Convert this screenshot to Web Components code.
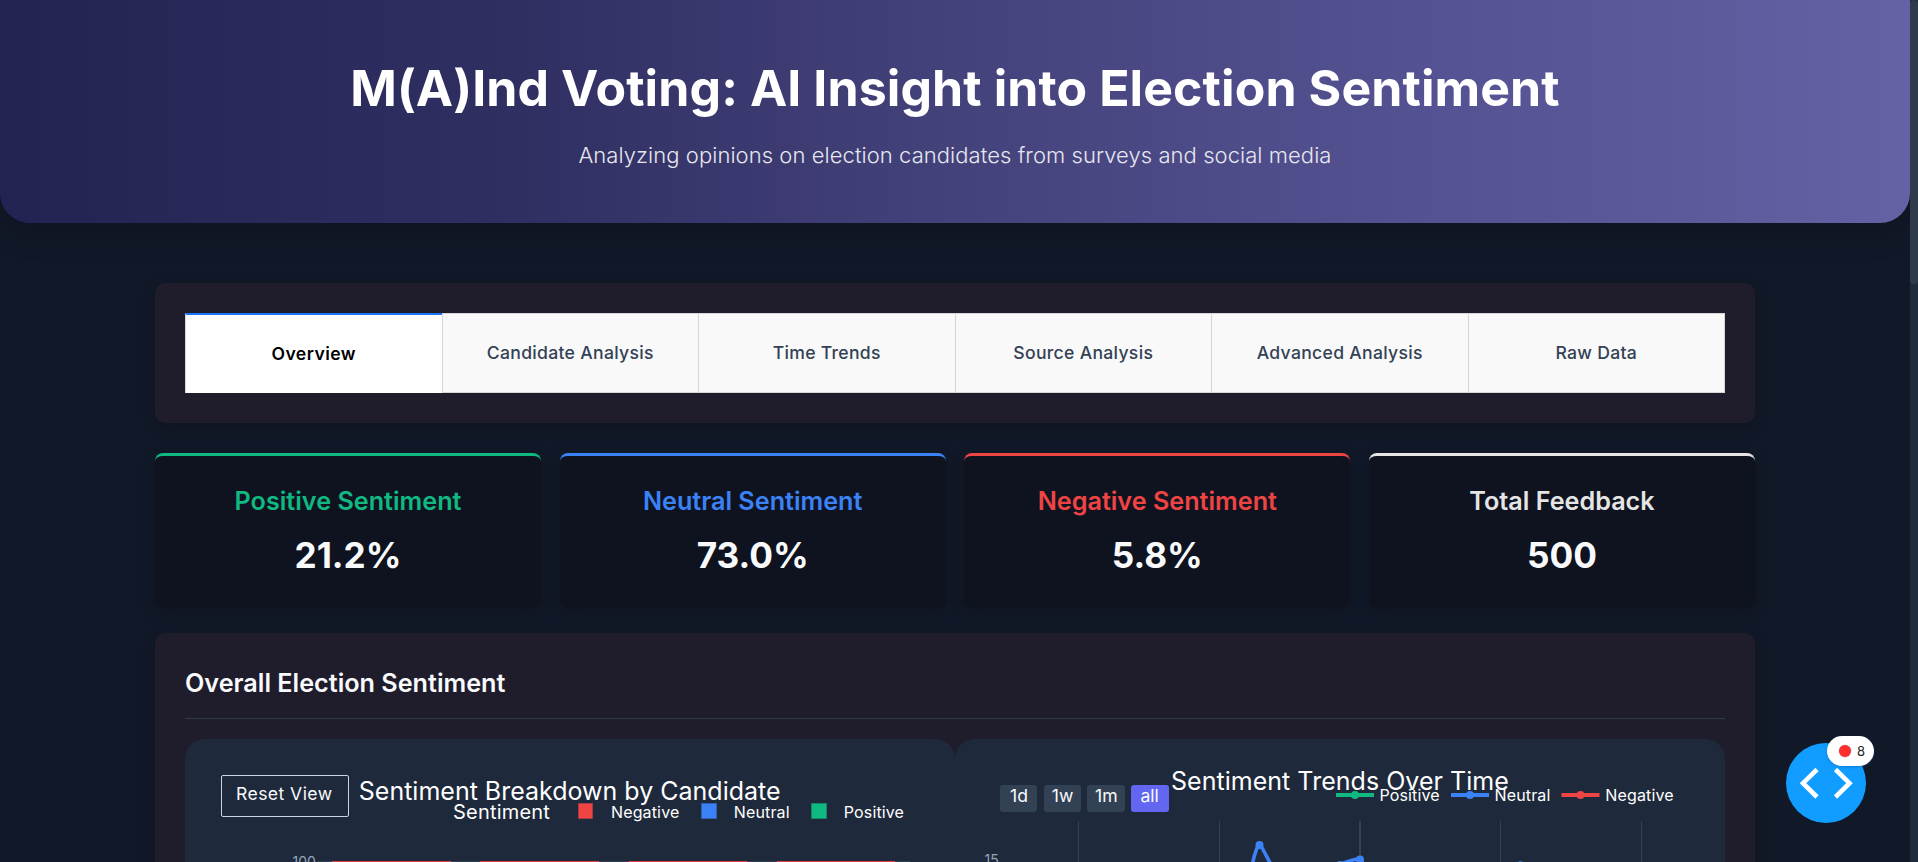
<!DOCTYPE html>
<html lang="en">
<head>
<meta charset="utf-8">
<title>M(A)Ind Voting</title>
<style>
html,body{margin:0;height:100%;overflow:hidden;background:#111827}
body{font-family:Inter,"Liberation Sans",sans-serif;color:#f8fafc}
</style>
</head>
<body>
<voting-app></voting-app>
<script>
const define = (name, html) => customElements.define(name, class extends HTMLElement {
  constructor() {
    super();
    this.attachShadow({mode: 'open'});
    const t = document.createElement('template');
    t.innerHTML = html;
    this.shadowRoot.append(t.content.cloneNode(true));
  }
});

define('page-hero', `
<style>
:host{display:flex;flex-direction:column;align-items:center;box-sizing:border-box;height:223px;padding-top:58px;
 background:linear-gradient(90deg,#232353 0%,#302f62 27%,#44427b 50%,#555293 75%,#6461a4 100%);border-radius:0 0 30px 30px;box-shadow:0 10px 30px rgba(0,0,0,.15)}
h1{margin:0;font-size:50px;line-height:60px;font-weight:700;letter-spacing:.09px;color:#fff;white-space:nowrap}
p{margin:24px 0 0;font-size:22px;line-height:27px;font-weight:300;letter-spacing:.06px;color:#e6e7ef;white-space:nowrap}
</style>
<h1><slot name="title"></slot></h1><p><slot></slot></p>`);

define('dark-panel', `
<style>
:host{display:block;box-sizing:border-box;padding:30px;background:#1f1d2c;border-radius:10px;box-shadow:0 5px 15px rgba(0,0,0,.15)}
</style><slot></slot>`);

define('tab-item', `
<style>
:host{display:flex;flex:1 1 0;align-items:center;justify-content:center;box-sizing:border-box;height:80px;padding-bottom:2px;background:#f9f9f9;
 border:1px solid #d6d6d6;border-right:0;font-size:17.6px;font-weight:500;letter-spacing:.3px;color:#334155}
:host(:last-child){border-right:1px solid #d6d6d6}
:host([selected]){background:#fff;color:#000;font-weight:600;letter-spacing:.45px;border-top:2px solid #1975fa;border-bottom:0}
</style><slot></slot>`);

define('tab-strip', `<style>:host{display:flex}</style><slot></slot>`);

define('stat-card', `
<style>
:host{display:flex;flex-direction:column;align-items:center;box-sizing:border-box;width:386px;height:155px;padding-top:29px;
 background:#0f131f;border-top:3px solid var(--tone);border-radius:8px;box-shadow:0 5px 15px rgba(0,0,0,.15)}
h3{margin:0;font-size:25.2px;line-height:32px;font-weight:600;color:var(--tone)}
p{margin:16px 0 0;font-size:35.2px;line-height:44px;font-weight:700;color:#f8fafc}
</style>
<h3><slot name="label"></slot></h3><p><slot></slot></p>`);

define('section-title', `
<style>
:host{display:block;box-sizing:border-box;height:56px;border-bottom:1px solid #2e3a4b;font-size:25.2px;line-height:40px;font-weight:600;color:#f8fafc}
</style><slot></slot>`);

define('chart-card', `
<style>
:host{display:block;flex:1 1 0;height:400px;background:#1e293b;border-radius:20px;overflow:hidden}
</style><slot></slot>`);

const chartText = `
:host{display:block}
svg{display:block;font-family:Inter,"Liberation Sans",sans-serif}
.title{font-size:25px;fill:#fff}
.legend{font-size:16px;letter-spacing:.14px;fill:#fff}
.tick{font-size:14px;fill:#94a3b8}`;

define('breakdown-chart', `
<style>${chartText}
.reset{font-size:17.6px;letter-spacing:.42px;fill:#f8fafc}
</style>
<svg width="770" height="400" viewBox="185 739 770 400">
 <rect x="221.5" y="775.5" width="127" height="41" rx="1.5" fill="none" stroke="#cbd5e1"/>
 <text class="reset" x="236" y="800">Reset View</text>
 <text class="title" x="358.8" y="800">Sentiment Breakdown by Candidate</text>
 <text x="453" y="819" font-size="20" letter-spacing=".2" fill="#fff">Sentiment</text>
 <g stroke-opacity=".6">
  <rect x="578.5" y="803.5" width="14" height="15" fill="#ef4444" stroke="#c23c42"/>
  <rect x="701.5" y="803.5" width="15" height="15" fill="#3b82f6" stroke="#3268c4"/>
  <rect x="811.5" y="803.5" width="15" height="15" fill="#10b981" stroke="#14956f"/>
 </g>
 <text class="legend" x="611" y="818">Negative</text>
 <text class="legend" x="733.8" y="818">Neutral</text>
 <text class="legend" x="843.8" y="818">Positive</text>
 <text class="tick" x="292.5" y="867">100</text>
 <path d="M317 861.5H910" stroke="#334155"/>
 <path d="M332 861.5H451M480 861.5H599M629 861.5H747M777 861.5H895" stroke="#e04144"/>
</svg>`);

define('trend-chart', `
<style>${chartText}
.range{font-size:17.6px;fill:#f8fafc;text-anchor:middle}
</style>
<svg width="770" height="400" viewBox="955 739 770 400">
 <g stroke="#334155"><path d="M1078.5 821v60M1219.5 821v60M1500.5 821v60M1641.5 821v60"/><path d="M1360 821v60" stroke-width="2"/></g>
 <g fill="#334155">
  <rect x="1000" y="785" width="37" height="27" rx="3"/>
  <rect x="1044" y="785" width="37" height="27" rx="3"/>
  <rect x="1087" y="785" width="38" height="27" rx="3"/>
  <rect x="1131" y="785" width="38" height="27" rx="3" fill="#6366f1"/>
 </g>
 <text class="range" x="1019" y="802">1d</text>
 <text class="range" x="1062.6" y="802">1w</text>
 <text class="range" x="1106.3" y="802">1m</text>
 <text class="range" x="1149.6" y="802">all</text>
 <g stroke-width="3.6" fill="none" stroke="#3b82f6" stroke-linejoin="round">
  <path d="M1252 866C1254 856 1256 848 1259.500 844C1264 850 1267 858 1272 866"/>
  <path d="M1340 864.500C1347 861 1353 860 1360 858.500L1367 870"/>
 </g>
 <g fill="#3b82f6"><circle cx="1259.5" cy="845" r="4"/><circle cx="1360" cy="859.5" r="4"/><circle cx="1340" cy="865" r="4"/><circle cx="1520.5" cy="865.2" r="4"/></g>
 <text class="title" x="1171" y="790" letter-spacing=".03">Sentiment Trends Over Time</text>
 <g stroke-width="4">
  <path d="M1336 795H1374" stroke="#10b981"/><path d="M1451 795H1489" stroke="#3b82f6"/><path d="M1561.5 795H1599.5" stroke="#ef4444"/>
 </g>
 <circle cx="1355" cy="795" r="4" fill="#10b981"/><circle cx="1470" cy="795" r="4" fill="#3b82f6"/><circle cx="1580.5" cy="795" r="4" fill="#ef4444"/>
 <text class="legend" x="1379.5" y="801">Positive</text>
 <text class="legend" x="1494.5" y="801">Neutral</text>
 <text class="legend" x="1605.3" y="801">Negative</text>
 <text class="tick" x="984.5" y="864.5">15</text>
</svg>`);

define('page-scrollbar', `
<style>
:host{display:block;width:8px;height:862px;background:#1e293b}
div{height:284px;border-radius:4px;background:#2f3a4a}
</style><div></div>`);

define('debug-button', `
<style>
:host{position:absolute;left:1786px;top:743px;width:80px;height:80px;border-radius:50%;background:#119dff}
svg{display:block}
.badge{position:absolute;left:41px;top:-7px;width:47px;height:30px;border-radius:15px;background:#fff;box-sizing:border-box;padding:0 9px 0 11.5px;
 display:flex;align-items:center;justify-content:space-between;font-size:13px;color:#222;box-shadow:0 1px 3px rgba(20,80,160,.4)}
i{width:12px;height:12px;border-radius:50%;background:#ff2e2e;box-shadow:0 0 0 .5px #ccc}
</style>
<svg width="80" height="80" viewBox="0 0 80 80" fill="none" stroke="#fff" stroke-width="4.6"><path d="M31 26.5L17 40.2L31 54M49.5 26.5L63.5 40.2L49.5 54"/></svg>
<div class="badge"><i></i><span>8</span></div>`);

define('voting-app', `
<style>
:host{display:flex;position:relative;width:1918px;height:862px;overflow:hidden;background:#111827}
main{width:1910px;flex:none}
.content{width:1600px;margin:60px auto 0}
.cards{display:flex;justify-content:space-between;margin:30px 0 25px}
.charts{display:flex;margin-top:20px}
</style>
<main>
 <page-hero><span slot="title">M(A)Ind Voting: AI Insight into Election Sentiment</span>Analyzing opinions on election candidates from surveys and social media</page-hero>
 <div class="content">
  <dark-panel><tab-strip>
   <tab-item selected>Overview</tab-item><tab-item>Candidate Analysis</tab-item><tab-item>Time Trends</tab-item><tab-item>Source Analysis</tab-item><tab-item>Advanced Analysis</tab-item><tab-item>Raw Data</tab-item>
  </tab-strip></dark-panel>
  <div class="cards">
   <stat-card style="--tone:#10b981"><span slot="label">Positive Sentiment</span>21.2%</stat-card>
   <stat-card style="--tone:#3b82f6"><span slot="label">Neutral Sentiment</span>73.0%</stat-card>
   <stat-card style="--tone:#ef4444"><span slot="label">Negative Sentiment</span>5.8%</stat-card>
   <stat-card style="--tone:#e5e5e5"><span slot="label">Total Feedback</span>500</stat-card>
  </div>
  <dark-panel>
   <section-title>Overall Election Sentiment</section-title>
   <div class="charts">
    <chart-card><breakdown-chart></breakdown-chart></chart-card>
    <chart-card><trend-chart></trend-chart></chart-card>
   </div>
  </dark-panel>
 </div>
</main>
<page-scrollbar></page-scrollbar>
<debug-button></debug-button>`);
</script>
</body>
</html>
